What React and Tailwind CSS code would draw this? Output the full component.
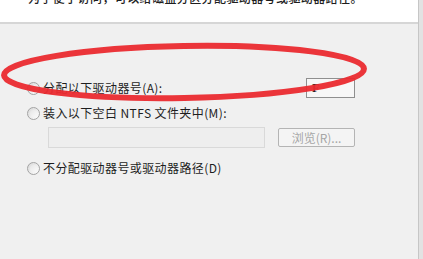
export default function App() {
    const font = { fontFamily: '"Noto Sans CJK SC", "Noto Sans", sans-serif' }

    function Radio() {
        return (
            <span className="w-[13px] h-[13px] shrink-0 rounded-full border border-[#a3a3a3] bg-linear-to-br from-[#d9d9d9] to-white flex items-center justify-center">
                <span className="w-[7px] h-[7px] rounded-full bg-linear-to-br from-[#e6e6e6] to-[#fafafa]" />
            </span>
        )
    }

    return (
        <div className="relative w-[423px] h-[259px] overflow-hidden flex bg-[#f0f0f0] text-[12px] text-[#1e1e1e]" style={font}>

            <div className="w-[418px] flex flex-col">
                <div className="h-[24px] bg-white border-b-2 border-[#d6d6d6] overflow-hidden">
                    <p className="pl-[28px] -mt-[9px] leading-[14px] tracking-[0.4px] whitespace-nowrap font-medium">
                        为了便于访问，可以给磁盘分区分配驱动器号或驱动器路径。
                    </p>
                </div>

                <div className="pl-[27px] pt-[53px] flex flex-col">
                    <div className="w-[328px] h-[22px] flex items-center justify-between">
                        <div className="flex items-center gap-[3px]">
                            <Radio />
                            <span className="tracking-[0.4px]">分配以下驱动器号(A):</span>
                        </div>
                        <div className="w-[49px] h-[20px] border border-[#8f8f8f] bg-[#f7f7f7] pl-[5px] flex items-center font-bold" style={{ fontFamily: '"Liberation Serif", serif' }}>
                            F
                        </div>
                    </div>

                    <div className="mt-[3px] h-[22px] flex items-center gap-[3px]">
                        <Radio />
                        <span className="tracking-[0.4px]">装入以下空白 NTFS 文件夹中(M):</span>
                    </div>

                    <div className="mt-[3px] w-[328px] pl-[21px] flex items-center justify-between">
                        <div className="w-[217px] h-[21px] border border-[#d9d9d9] bg-[#eeeeee]" />
                        <button className="w-[77px] h-[19px] rounded-[2px] border border-[#b4b4b4] bg-[#f4f4f4] text-[#a6a6a6] text-[12px] leading-none">
                            浏览(R)...
                        </button>
                    </div>

                    <div className="mt-[9px] h-[22px] flex items-center gap-[3px]">
                        <Radio />
                        <span className="tracking-[0.4px]">不分配驱动器号或驱动器路径(D)</span>
                    </div>
                </div>
            </div>

            <div className="w-px bg-[#c6c6c6]" />
            <div className="flex-1 bg-[#e2e2e2]" />

            <svg className="absolute inset-0 pointer-events-none" width="423" height="259" viewBox="0 0 423 259">
                <ellipse cx="184" cy="72" rx="180" ry="26" fill="none" stroke="#ea2a2f" strokeWidth="6" transform="rotate(-1 184 72)" opacity="0.95" />
            </svg>
        </div>
    )
}
